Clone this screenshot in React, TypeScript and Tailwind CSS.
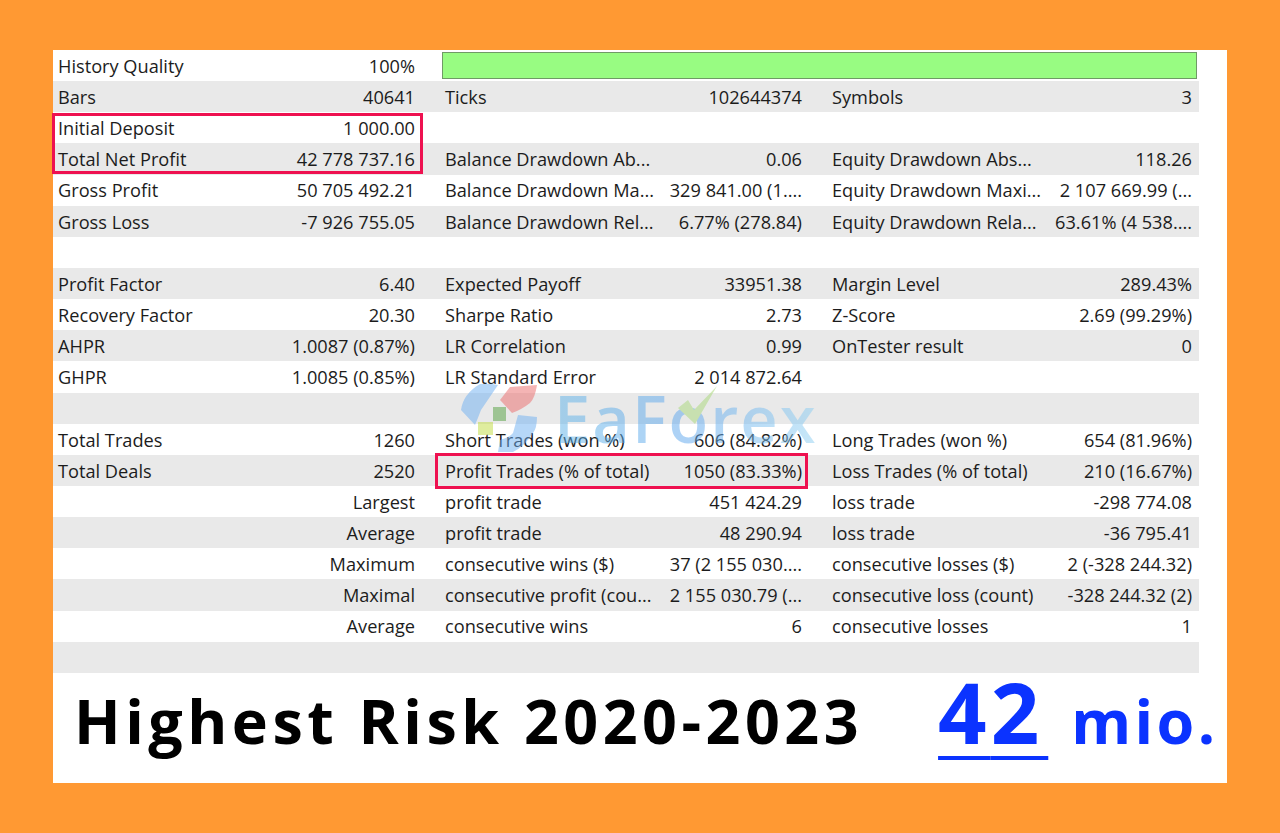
const rows: string[][] = [
  ["History Quality", "100%"],
  ["Bars", "40641", "Ticks", "102644374", "Symbols", "3"],
  ["Initial Deposit", "1 000.00"],
  ["Total Net Profit", "42 778 737.16", "Balance Drawdown Ab...", "0.06", "Equity Drawdown Abs...", "118.26"],
  ["Gross Profit", "50 705 492.21", "Balance Drawdown Ma...", "329 841.00 (1....", "Equity Drawdown Maxi...", "2 107 669.99 (..."],
  ["Gross Loss", "-7 926 755.05", "Balance Drawdown Rel...", "6.77% (278.84)", "Equity Drawdown Rela...", "63.61% (4 538...."],
  [],
  ["Profit Factor", "6.40", "Expected Payoff", "33951.38", "Margin Level", "289.43%"],
  ["Recovery Factor", "20.30", "Sharpe Ratio", "2.73", "Z-Score", "2.69 (99.29%)"],
  ["AHPR", "1.0087 (0.87%)", "LR Correlation", "0.99", "OnTester result", "0"],
  ["GHPR", "1.0085 (0.85%)", "LR Standard Error", "2 014 872.64"],
  [],
  ["Total Trades", "1260", "Short Trades (won %)", "606 (84.82%)", "Long Trades (won %)", "654 (81.96%)"],
  ["Total Deals", "2520", "Profit Trades (% of total)", "1050 (83.33%)", "Loss Trades (% of total)", "210 (16.67%)"],
  ["", "Largest", "profit trade", "451 424.29", "loss trade", "-298 774.08"],
  ["", "Average", "profit trade", "48 290.94", "loss trade", "-36 795.41"],
  ["", "Maximum", "consecutive wins ($)", "37 (2 155 030....", "consecutive losses ($)", "2 (-328 244.32)"],
  ["", "Maximal", "consecutive profit (cou...", "2 155 030.79 (...", "consecutive loss (count)", "-328 244.32 (2)"],
  ["", "Average", "consecutive wins", "6", "consecutive losses", "1"],
  [],
];

function Cell({ label, value, last }: { label?: string; value?: string; last?: boolean }) {
  return (
    <div className={`flex items-center justify-between pt-[2px] pl-[5px] whitespace-nowrap ${last ? "pr-[7px]" : "pr-[5px]"}`}>
      <span>{label}</span>
      <span>{value}</span>
    </div>
  );
}

function Watermark() {
  return (
    <div className="absolute left-[459px] top-[378px] flex items-center opacity-50 pointer-events-none">
      <svg width="84" height="84" viewBox="0 0 84 84">
        <path d="M21 6 Q30 5 39 7 L22 32 Q19 40 16 47 L2 32 Q4 16 21 6 Z" fill="#6fb0f2" />
        <path d="M51 9 L78 7 Q76 20 71 25 Q62 32 53 35 L41 22 Z" fill="#eb6b6b" />
        <rect x="34" y="29" width="13" height="14" fill="#53a040" />
        <rect x="19" y="44" width="15" height="13" fill="#c0dd40" />
        <path d="M59 37 L78 39 Q78 50 74 55 Q66 68 54 74 L39 74 L41 62 Q50 60 54 55 Z" fill="#6fb0f2" />
      </svg>
      <div className="relative ml-[11px] mt-[-3px] text-[65px] leading-none font-semibold tracking-[2px] [font-family:'Open_Sans',sans-serif] text-transparent bg-clip-text bg-gradient-to-r from-[#5fb4e8] via-[#5da6ee] to-[#8fd0f2]">
        EaForex
      </div>
      <svg className="absolute left-[216px] top-[2px]" width="50" height="46" viewBox="0 0 50 46">
        <path d="M3 28 L13 20 L19 30 L42 6 L20 44 Z" fill="#a8d878" />
      </svg>
    </div>
  );
}

export default function App() {
  return (
    <div className="w-[1280px] h-[833px] bg-[#ff9933] pt-[50px] pl-[53px] overflow-hidden">
      <div className="relative w-[1174px] h-[733px] bg-white text-[18.2px] text-[#1c1c1c] [font-family:'Open_Sans',sans-serif]">
        <div className="w-[1146px]">
          {rows.map((r, i) => (
            <div
              key={i}
              className={`grid grid-cols-[367px_367px_372px] gap-x-[20px] h-[31.15px] ${i % 2 === 1 ? "bg-[#e9e9e9]" : "bg-white"}`}
            >
              <Cell label={r[0]} value={r[1]} />
              {i === 0 ? (
                <div className="col-span-2 pl-[2px] pr-[2px] pt-[2px]">
                  <div className="h-[27px] bg-[#98fc82] border border-[#6f9a66]" />
                </div>
              ) : (
                <>
                  <Cell label={r[2]} value={r[3]} />
                  <Cell label={r[4]} value={r[5]} last />
                </>
              )}
            </div>
          ))}
        </div>
        <div className="flex items-baseline mt-[-12px] pl-[21px] font-bold [font-family:'Open_Sans',sans-serif]">
          <span className="text-[61px] leading-[100px] tracking-[4.5px] text-black">Highest Risk 2020-2023</span>
          <span className="ml-[75px] text-[85px] leading-[100px] tracking-[4px] text-[#0b33ff] underline decoration-[4px] underline-offset-[12px]">
            4<span className="tracking-[9px]">2</span>
          </span>
          <span className="ml-[23px] text-[61px] leading-[100px] tracking-[3.4px] text-[#0b33ff]">mio.</span>
        </div>
        <div className="absolute left-[-1px] top-[63px] w-[371px] h-[61px] border-[3px] border-[#ee1150]" />
        <div className="absolute left-[382px] top-[403px] w-[373px] h-[36px] border-[3px] border-[#ee1150]" />
      </div>
      <Watermark />
    </div>
  );
}
